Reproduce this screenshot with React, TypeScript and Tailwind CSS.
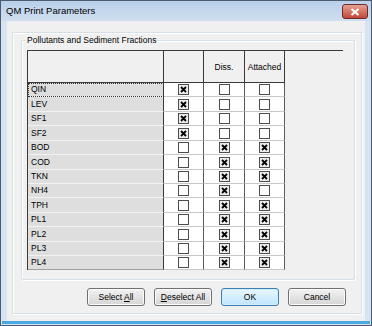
const rows: [string, boolean, boolean, boolean, number][] = [
  ['QIN', true, false, false, 14],
  ['LEV', true, false, false, 15],
  ['SF1', true, false, false, 14],
  ['SF2', true, false, false, 15],
  ['BOD', false, true, true, 14],
  ['COD', false, true, true, 15],
  ['TKN', false, true, true, 14],
  ['NH4', false, true, false, 14],
  ['TPH', false, true, true, 15],
  ['PL1', false, true, true, 14],
  ['PL2', false, true, true, 15],
  ['PL3', false, true, true, 14],
  ['PL4', false, true, true, 14],
];

const Check = ({ on }: { on: boolean }) => (
  <svg width="11" height="11" viewBox="0 0 11 11">
    <rect x="0.5" y="0.5" width="10" height="10" fill={on ? '#ececec' : '#ffffff'} stroke="#4d4d4d" />
    {on && <path d="M3 3 L8 8 M8 3 L3 8" stroke="#000" strokeWidth="1.8" />}
  </svg>
);

const Button = ({ children, primary }: { children: React.ReactNode; primary?: boolean }) => (
  <button
    className={
      primary
        ? 'w-[58px] h-[18px] rounded-[3px] border border-[#3c7fb1] bg-gradient-to-b from-[#eaf6fd] to-[#bee6fd] text-[8.5px] shadow-[inset_0_0_0_1px_#d4eefc]'
        : 'w-[58px] h-[18px] rounded-[3px] border border-[#707070] bg-gradient-to-b from-[#f2f2f2] to-[#d5d5d5] text-[8.5px] shadow-[inset_0_0_0_1px_#fcfcfc]'
    }
  >
    {children}
  </button>
);

export default function App() {
  return (
    <div className="w-[372px] h-[326px] flex flex-col bg-[#d6e3f2] border border-[#4c5b6d] font-['Liberation_Sans',Arial,sans-serif] text-black overflow-hidden">
      {/* title bar */}
      <div className="h-[20px] shrink-0 flex items-center justify-between pl-[5px] pr-[3px] bg-gradient-to-b from-[#b9cfea] to-[#d0dff0]">
        <span className="text-[9.5px]">QM Print Parameters</span>
        <div className="w-[26px] h-[15px] mt-[1px] rounded-[3px] border border-[#6e2b2b] bg-gradient-to-b from-[#e5a293] to-[#c2453a] flex items-center justify-center">
          <svg width="10" height="8" viewBox="0 0 10 8">
            <path d="M1.5 1 L8.5 7 M8.5 1 L1.5 7" stroke="#fff" strokeWidth="2" />
          </svg>
        </div>
      </div>

      {/* client area */}
      <div className="flex-1 mx-[6px] bg-[#f0f0f0] pl-[5px] pr-[3px] pt-[11px]">
        <div className="w-[350px] h-[282px] border border-[#d5dfe5] shadow-[inset_1px_1px_0_#fff,1px_1px_0_#fff] pl-[8px] pt-[7px] pr-[6px]">
          {/* group box */}
          <div className="relative h-[240px] border border-[#d5dfe5] rounded-[2px] shadow-[inset_1px_1px_0_#fff,1px_1px_0_#fff] pl-[5px] pt-[9px]">
            <span className="absolute left-[4px] top-[-6px] px-[1px] bg-[#f0f0f0] text-[8.5px] leading-[11px]">
              Pollutants and Sediment Fractions
            </span>

            {/* grid */}
            <div className="w-[316px] border-t border-l border-[#3a3a3a] text-[8.5px]">
              <div className="flex h-[32px] border-b border-[#3a3a3a] w-[257px]">
                <div className="w-[136px] border-r border-[#3a3a3a]" />
                <div className="w-[40px] border-r border-[#3a3a3a]" />
                <div className="w-[41px] border-r border-[#3a3a3a] flex items-center justify-center pt-[1px]">Diss.</div>
                <div className="w-[40px] border-r border-[#3a3a3a] flex items-center justify-center pt-[1px]">Attached</div>
              </div>
              {rows.map(([name, a, b, c, h], i) => (
                <div key={name} className="flex w-[257px]" style={{ height: h }}>
                  <div
                    className={
                      'w-[136px] border-r border-[#3a3a3a] bg-[#dedede] border-b flex items-center pl-[3px] ' +
                      (i === rows.length - 1 ? 'border-b-[#a0a0a0]' : 'border-b-[#f2f2f2]') +
                      (i === 0 ? ' outline-1 outline-dotted outline-[#333] -outline-offset-1' : '')
                    }
                  >
                    {name}
                  </div>
                  <div className="w-[40px] border-r border-b border-r-[#5a5a5a] border-b-[#c8c8c8] bg-white flex items-center justify-center">
                    <Check on={a} />
                  </div>
                  <div className="w-[41px] border-r border-b border-r-[#5a5a5a] border-b-[#c8c8c8] bg-white flex items-center justify-center">
                    <Check on={b} />
                  </div>
                  <div className="w-[40px] border-r border-b border-r-[#5a5a5a] border-b-[#c8c8c8] bg-white flex items-center justify-center">
                    <Check on={c} />
                  </div>
                </div>
              ))}
            </div>
          </div>

          {/* buttons */}
          <div className="flex gap-[9px] pl-[66px] mt-[8px]">
            <Button>
              Select <u>A</u>ll
            </Button>
            <Button>
              <u>D</u>eselect All
            </Button>
            <Button primary>OK</Button>
            <Button>Cancel</Button>
          </div>
        </div>
      </div>
      <div className="h-[3px] shrink-0 mx-[1px] mb-[1px] bg-[#4aa9e0]" />
    </div>
  );
}
